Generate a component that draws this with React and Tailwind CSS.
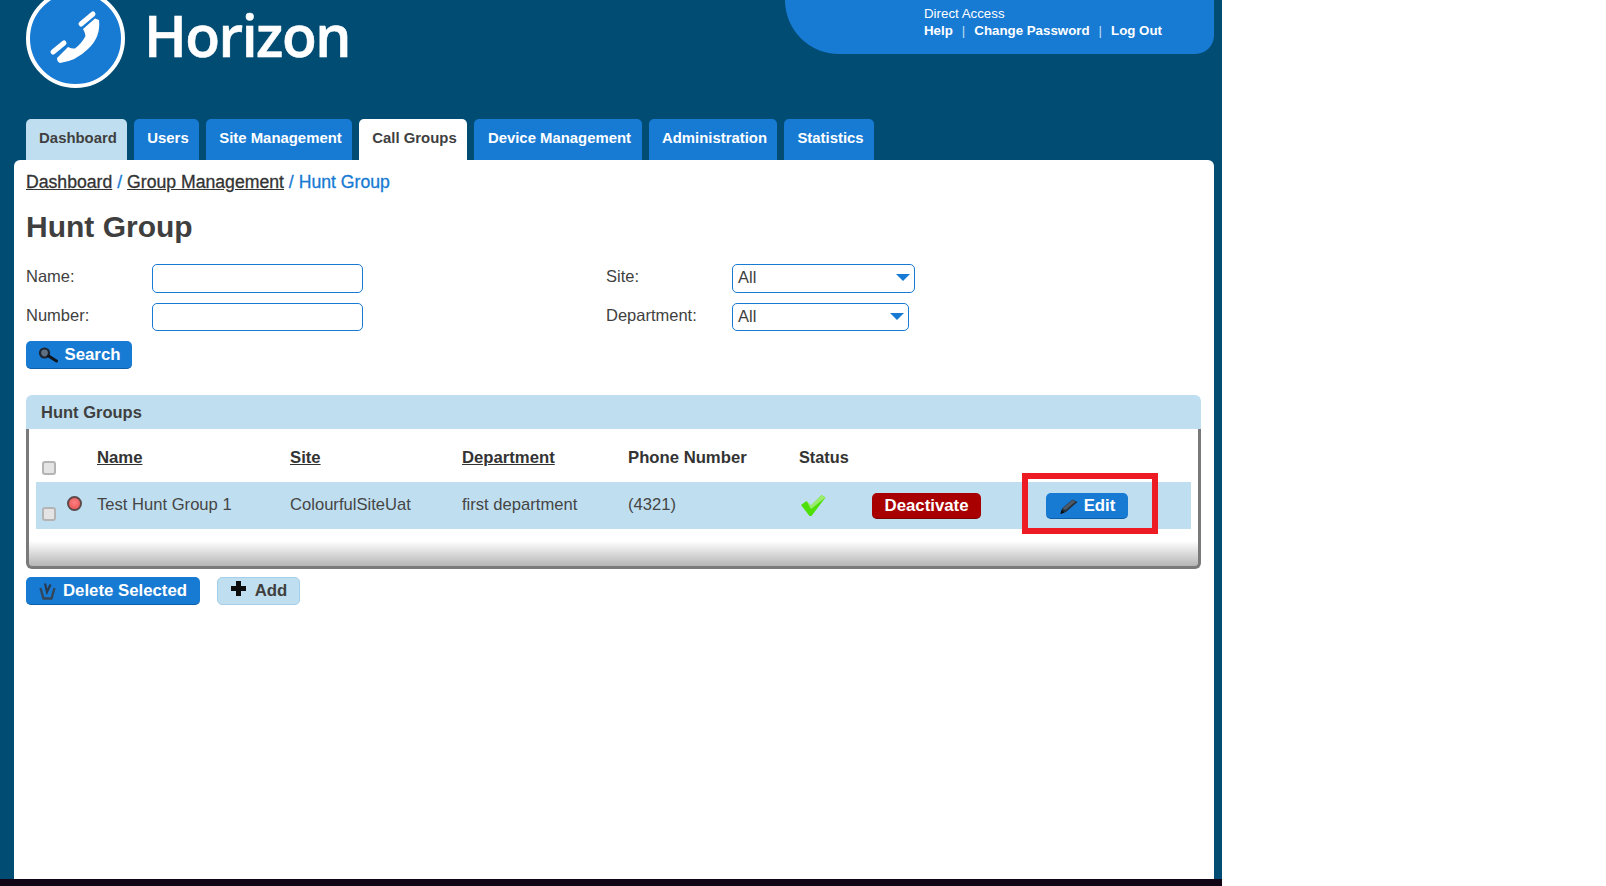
import React from 'react';

const sans = 'font-["Liberation_Sans",Arial,sans-serif]';

const tabs = [
  { label: 'Dashboard', style: 'bg-[#bfdff1] text-[#3f3f3f] w-[101px]' },
  { label: 'Users', style: 'bg-[#177ad3] text-white w-[65px]' },
  { label: 'Site Management', style: 'bg-[#177ad3] text-white w-[146px]' },
  { label: 'Call Groups', style: 'bg-white text-[#3f3f3f] w-[108px]' },
  { label: 'Device Management', style: 'bg-[#177ad3] text-white w-[168px]' },
  { label: 'Administration', style: 'bg-[#177ad3] text-white w-[128px]' },
  { label: 'Statistics', style: 'bg-[#177ad3] text-white w-[90px]' },
];

/* ─── Icons ─────────────────────────────────────────────────── */
const LogoPhone = () => (
  <svg width="99" height="99" viewBox="0 0 99 99" className="shrink-0 -mt-[11px]">
    <circle cx="49.5" cy="49.5" r="47.5" fill="#177ad3" stroke="#fff" strokeWidth="4" />
    <path d="M73 31 Q75 48 62 60 Q50 72 34 74 Q31 73 31 69 L42 58 Q46 60 49 59.5 Q56 54 59.5 47 Q59 43 57 40 L69 29.5 Z" fill="#fff" />
    <path d="M55 35 L67 25 M27 63 L38 54" stroke="#fff" strokeWidth="5" strokeLinecap="round" />
  </svg>
);

const SearchIcon = () => (
  <svg width="21" height="16" viewBox="0 0 21 16" className="shrink-0">
    <circle cx="6.5" cy="6" r="4.5" fill="#5d6f80" stroke="#1c2530" strokeWidth="2.2" />
    <path d="M10.5 9 L18.5 14" stroke="#10161c" strokeWidth="3" strokeLinecap="round" />
  </svg>
);

const TrashIcon = () => (
  <svg width="17" height="18" viewBox="0 0 17 18" className="shrink-0">
    <path d="M1.5 6 L4.5 16.5 L12.5 16.5 L15.5 6" fill="none" stroke="#34475a" strokeWidth="2.4" />
    <path d="M6 1.5 L8 10 L11.5 2.5" fill="none" stroke="#2b3a4a" strokeWidth="2.2" />
  </svg>
);

const PlusIcon = () => (
  <svg width="17" height="17" viewBox="0 0 17 17" className="shrink-0 -mt-[6px]">
    <path d="M6 1 H11 V6 H16 V11 H11 V16 H6 V11 H1 V6 H6 Z" fill="#0c0c0c" />
  </svg>
);

const PencilIcon = () => (
  <svg width="21" height="18" viewBox="0 0 20 18" className="shrink-0">
    <path d="M1 17 L2.5 11.5 L13 2.5 L18 5 L6.5 15 Z" fill="#25303b" />
    <path d="M3 11.5 L13 3 L16 4.5 L6 13 Z" fill="#4d5a68" />
    <path d="M1 17 L2 13 L5 15.5 Z" fill="#05080a" />
  </svg>
);

const CheckIcon = () => (
  <svg width="26" height="23" viewBox="0 0 26 23">
    <path d="M1 11 L6.5 7 L11 11.5 L21.5 1 L25.5 3.5 L11.5 22 L9.5 22 Z" fill="#4fdf08" />
    <path d="M11 11.5 L21.5 1 L25.5 3.5 L21 7 L11 15 L6.5 7 Z" fill="#9bec6e" />
  </svg>
);

const Caret = () => <span className="w-0 h-0 border-x-[7px] border-x-transparent border-t-[7px] border-t-[#177ad3]" />;

const Checkbox = ({ className }) => (
  <span className={`block w-[14px] h-[14px] rounded-[3px] bg-[#e4e4e4] border-2 border-[#b4b4b4] ${className}`} />
);

const Button = ({ icon, label, style }) => (
  <button className={`flex items-center justify-center rounded-[5px] text-[16.8px] font-bold ${style}`}>
    {icon}
    {label}
  </button>
);

/* ─── Search form ───────────────────────────────────────────── */
const FieldRow = ({ label, children, height }) => (
  <div className="flex items-start" style={{ height }}>
    <label className="w-[126px] text-[16.5px] text-[#3f3f3f] leading-[24px]">{label}</label>
    {children}
  </div>
);

const TextField = ({ tall }) => (
  <input className={`w-[211px] ${tall ? 'h-[29px]' : 'h-[28px]'} rounded-[5px] border border-[#177ad3] bg-white`} />
);

const SelectField = ({ width, tall }) => (
  <div className={`${width} ${tall ? 'h-[29px]' : 'h-[28px]'} flex items-center justify-between pl-[5px] pr-[4px] pb-[2px] rounded-[5px] border border-[#177ad3] text-[16.5px] text-[#3f3f3f]`}>
    All
    <Caret />
  </div>
);

/* ─── Page ──────────────────────────────────────────────────── */
export default function App() {
  return (
    <div className={`${sans} w-[1222px] h-[886px] overflow-hidden flex flex-col bg-[#004c73]`}>
      {/* Header */}
      <header className="h-[119px] shrink-0 flex justify-between pl-[26px] pr-[8px]">
        <div className="flex items-start gap-[19px]">
          <LogoPhone />
          <span className='font-["Open_Sans",sans-serif] font-semibold text-[57px] leading-[70px] tracking-[-1.5px] text-white [-webkit-text-stroke:0.6px]'>Horizon</span>
        </div>
        <div className="w-[429px] h-[54px] pl-[139px] pt-[5px] bg-[#177ad3] rounded-bl-[70px] rounded-br-[24px] text-white text-[13.3px] leading-[17px]">
          <div>Direct Access</div>
          <div className="flex items-center font-bold">
            Help
            <span className="mx-[9px] font-normal text-[#bfdff1]">|</span>
            Change Password
            <span className="mx-[9px] font-normal text-[#bfdff1]">|</span>
            Log Out
          </div>
        </div>
      </header>

      {/* Tabs */}
      <nav className="h-[41px] shrink-0 flex gap-[7px] pl-[26px]">
        {tabs.map(tab => (
          <a key={tab.label} className={`flex items-center justify-center pb-[3px] pl-[3px] rounded-t-[5px] text-[14.9px] font-bold ${tab.style}`}>
            {tab.label}
          </a>
        ))}
      </nav>

      {/* Content */}
      <main className="flex-1 ml-[14px] mr-[8px] px-[12px] bg-white rounded-t-[6px] text-[#3f3f3f]">
        <div className="mt-[11px] text-[17.65px] leading-[23px] [-webkit-text-stroke:0.3px]">
          <a className="underline text-[#333]">Dashboard</a>
          <span className="text-[#177ad3]"> / </span>
          <a className="underline text-[#333]">Group Management</a>
          <span className="text-[#177ad3]"> / Hunt Group</span>
        </div>
        <h1 className="mt-[13px] text-[30px] leading-[40px] font-bold text-[#3f3f3f]">Hunt Group</h1>

        <div className="mt-[17px] grid grid-cols-[580px_1fr]">
          <div>
            <FieldRow label="Name:" height={39}><TextField tall /></FieldRow>
            <FieldRow label="Number:" height={38}><TextField /></FieldRow>
          </div>
          <div>
            <FieldRow label="Site:" height={39}><SelectField width="w-[183px]" tall /></FieldRow>
            <FieldRow label="Department:" height={38}><SelectField width="w-[177px]" /></FieldRow>
          </div>
        </div>

        <Button
          icon={<span className="mr-[6px]"><SearchIcon /></span>}
          label="Search"
          style="w-[106px] h-[28px] bg-[#177ad3] text-white border-b border-[#0d5ea8]"
        />

        {/* Hunt groups panel */}
        <section className="mt-[26px] w-[1175px]">
          <h2 className="h-[34px] px-[15px] flex items-center bg-[#bfdff1] rounded-t-[6px] text-[16.5px] font-bold text-[#3f3f3f]">
            Hunt Groups
          </h2>
          <div className="h-[140px] px-[7px] border-x-[3px] border-b-[3px] border-[#7a7a7a] rounded-b-[6px] bg-[linear-gradient(to_bottom,#fff_0,#fff_112px,#b5b5b5_137px)]">
            <div className="h-[53px] grid grid-cols-[61px_193px_172px_166px_171px_1fr] text-[16.7px] font-bold text-[#333]">
              <div className="pl-[6px] pt-[32px]"><Checkbox /></div>
              <div className="pt-[16px] underline">Name</div>
              <div className="pt-[16px] underline">Site</div>
              <div className="pt-[16px] underline">Department</div>
              <div className="pt-[16px]">Phone Number</div>
              <div className="pt-[16px] text-[16.3px]">Status</div>
            </div>
            <div className="relative h-[47px] grid grid-cols-[61px_193px_172px_166px_171px_73px_174px_1fr] items-center bg-[#bfdff1] text-[16.6px] text-[#454545]">
              <div className="relative h-full">
                <Checkbox className="absolute left-[6px] top-[25px]" />
                <span className="absolute left-[31px] top-[14px] w-[15px] h-[15px] rounded-full bg-[radial-gradient(circle_at_50%_40%,#ff8080,#e84f4f)] border-2 border-[#5d4a4a]" />
              </div>
              <div className="pb-[1px]">Test Hunt Group 1</div>
              <div className="pb-[1px]">ColourfulSiteUat</div>
              <div className="pb-[1px]">first department</div>
              <div className="pb-[1px]">(4321)</div>
              <div className="pl-[1px]"><CheckIcon /></div>
              <Button label="Deactivate" style="w-[109px] h-[26px] pt-[1px] bg-[#a80000] text-white border-b border-[#7d0000]" />
              <Button
                icon={<span className="mr-[4px]"><PencilIcon /></span>}
                label="Edit"
                style="w-[82px] h-[26px] pt-[1px] bg-[#177ad3] text-white border-b border-[#0d5ea8]"
              />
              {/* annotation box round the edit button */}
              <span className="absolute left-[986px] -top-[9px] w-[136px] h-[61px] border-[6px] border-[#ed1c24]" />
            </div>
          </div>
        </section>

        <div className="mt-[8px] flex gap-[17px]">
          <Button icon={<span className="mr-[7px]"><TrashIcon /></span>} label="Delete Selected" style="w-[174px] h-[28px] bg-[#177ad3] text-white border-b border-[#0d5ea8]" />
          <Button icon={<span className="mr-[8px]"><PlusIcon /></span>} label="Add" style="w-[83px] h-[28px] bg-[#bfdff1] text-[#3f3f3f] border border-[#a5cfe8]" />
        </div>
      </main>
      <div className="h-[7px] shrink-0 bg-[#120516]" />
    </div>
  );
}
